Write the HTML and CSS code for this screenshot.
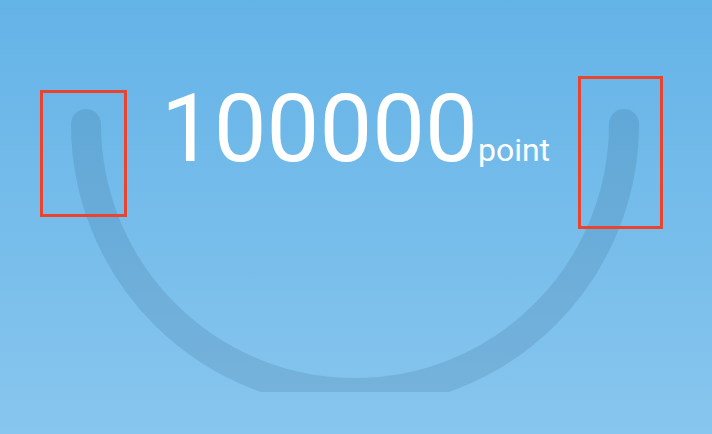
FILE: index.html
```html
<!DOCTYPE html>
<html>
<head>
<meta charset="utf-8">
<link rel="stylesheet" href="styles.css">
</head>
<body>
<div class="stage">
  <svg class="gauge" width="712" height="392" viewBox="0 0 712 392">
    <path d="M86 124 A269 269 0 0 0 624 124" fill="none" stroke="rgba(20,60,100,0.13)" stroke-width="30" stroke-linecap="round"/>
  </svg>
  <div class="score">
    <span class="value">100000</span><span class="unit">point</span>
  </div>
  <div class="mark mark-left"></div>
  <div class="mark mark-right"></div>
</div>
</body>
</html>
```
FILE: styles.css
```css
html, body {
  margin: 0;
  padding: 0;
}
body {
  width: 712px;
  height: 434px;
  overflow: hidden;
  font-family: Roboto, "Noto Sans", sans-serif;
}
.stage {
  position: relative;
  width: 712px;
  height: 434px;
  background: linear-gradient(180deg, #64b3e7 0%, #87c6ee 100%);
  overflow: hidden;
}
.gauge {
  position: absolute;
  left: 0;
  top: 0;
  display: block;
}
.score {
  position: relative;
  display: flex;
  justify-content: center;
  align-items: baseline;
  padding-top: 82px;
  padding-right: 1px;
  color: #fff;
  line-height: 1;
}
.value {
  font-size: 94px;
  font-weight: 400;
}
.unit {
  font-size: 32px;
}
.mark {
  position: absolute;
  border: 3px solid #e94430;
  box-sizing: border-box;
}
.mark-left {
  left: 40px;
  top: 90px;
  width: 87px;
  height: 127px;
}
.mark-right {
  left: 578px;
  top: 76px;
  width: 85px;
  height: 153px;
}
```
